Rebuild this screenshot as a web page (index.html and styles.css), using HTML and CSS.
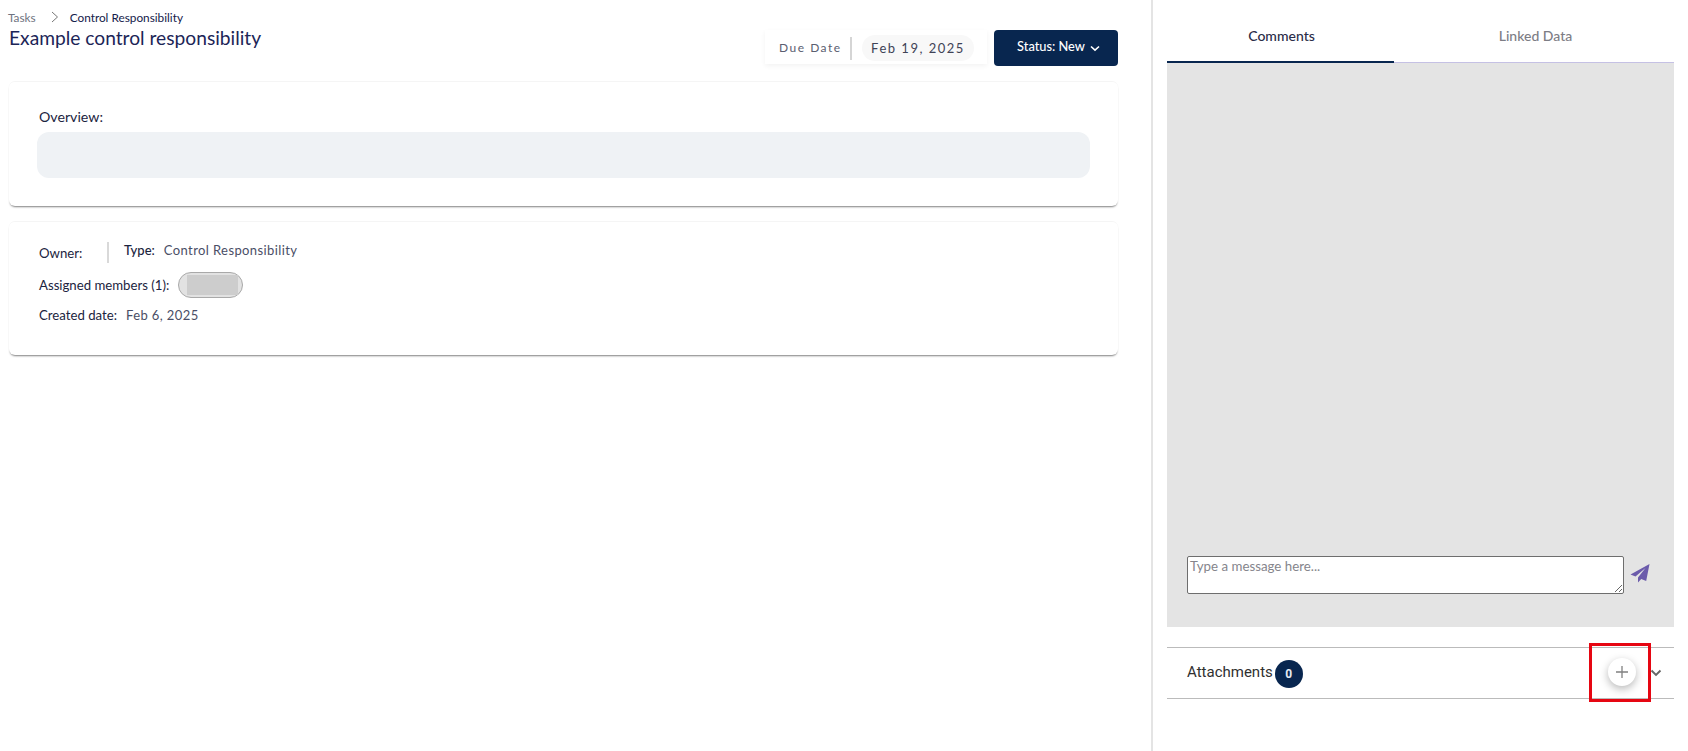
FILE: index.html
```html
<!DOCTYPE html>
<html lang="en">
<head>
<meta charset="utf-8">
<title>Example control responsibility</title>
<link rel="stylesheet" href="styles.css">
</head>
<body>
<div class="page">
  <main class="left">
    <header class="head">
      <div class="head-text">
        <nav class="crumbs">
          <span class="crumb-root">Tasks</span>
          <svg class="crumb-sep" width="10" height="12" viewBox="0 0 10 12"><path d="M2 1l5.5 5L2 11" fill="none" stroke="#777" stroke-width="1"/></svg>
          <span class="crumb-cur">Control Responsibility</span>
        </nav>
        <h1 class="title">Example control responsibility</h1>
      </div>
      <div class="head-actions">
        <div class="due">
          <span class="due-label">Due Date</span>
          <span class="due-div"></span>
          <span class="due-pill">Feb 19, 2025</span>
        </div>
        <button class="status">Status: New
          <svg class="status-chev" width="10" height="7" viewBox="0 0 10 7"><path d="M1 1.5l4 3.6 4-3.6" fill="none" stroke="#fff" stroke-width="1.6"/></svg>
        </button>
      </div>
    </header>

    <section class="card card-overview">
      <div class="ov-label">Overview:</div>
      <div class="ov-box"></div>
    </section>

    <section class="card card-meta">
      <div class="meta-row1">
        <span class="label owner">Owner:</span>
        <span class="meta-div"></span>
        <span class="label type">Type:</span>
        <span class="val type-val">Control Responsibility</span>
      </div>
      <div class="meta-row2">
        <span class="label">Assigned members (1):</span>
        <span class="chip"><span class="chip-in"></span></span>
      </div>
      <div class="meta-row3">
        <span class="label">Created date:</span>
        <span class="val">Feb 6, 2025</span>
      </div>
    </section>
  </main>

  <aside class="right">
    <div class="tabs">
      <div class="tab tab-on">Comments</div>
      <div class="tab tab-off">Linked Data</div>
    </div>
    <div class="chat">
      <div class="composer">
        <textarea class="input" placeholder="Type a message here..."></textarea>
        <svg class="send" width="20" height="20" viewBox="0 0 20 20"><path d="M19.5 1L0.5 11.5l5 2 10-8.5-7.5 9.5v5l3.2-3.6 5 2z" fill="#6b5bab"/></svg>
      </div>
    </div>
    <div class="attach">
      <span class="attach-name">Attachments</span>
      <span class="badge">0</span>
      <span class="plus-btn">
        <svg width="14" height="14" viewBox="0 0 14 14"><path d="M7 1v12M1 7h12" stroke="#808080" stroke-width="1.3" fill="none"/></svg>
      </span>
      <svg class="att-chev" width="12" height="8" viewBox="0 0 12 8"><path d="M1.5 1.5L6 6l4.5-4.5" fill="none" stroke="#666" stroke-width="1.9"/></svg>
      <span class="highlight"></span>
    </div>
  </aside>
</div>
</body>
</html>
```
FILE: styles.css
```css
* { box-sizing: border-box; }
html, body { margin: 0; padding: 0; height: 100%; background: #fff; overflow: hidden; }
body { font-family: Lato, "Liberation Sans", sans-serif; color: #1b2440; }
.page { display: flex; height: 751px; }

.left { width: 1153px; padding: 0 33px 0 9px; border-right: 2px solid #e4e4e4; flex: none; }
.head { display: flex; justify-content: space-between; height: 81px; }
.crumbs { display: flex; align-items: center; height: 14px; margin: 10px 0 0 -1px; font-size: 11.8px; }
.crumb-root { color: #6f7380; }
.crumb-sep { margin: 0 10px 0 14px; }
.crumb-cur { color: #14204a; }
.title { margin: 2px 0 0; font-size: 19.2px; line-height: 24px; font-weight: 400; color: #1c2557; }
.head-actions { display: flex; align-items: flex-start; margin-top: 30px; }
.due { display: flex; align-items: center; width: 222px; height: 34px; padding: 5px 0 3px 14px; margin-right: 7px; background: #fff; box-shadow: 0 2px 5px rgba(0,0,0,.05); letter-spacing: 1.5px; color: #5a5e70; }
.due-label { width: 71px; flex: none; font-size: 12px; margin-top: -2px; }
.due-div { width: 2px; height: 23px; background: #d5d5d5; flex: none; }
.due-pill { width: 112px; height: 26px; margin-left: 10px; border-radius: 13px; background: #f8f8f8; display: flex; align-items: center; justify-content: center; flex: none; color: #3f4356; font-size: 13px; }
.status { width: 124px; height: 36px; border: 0; border-radius: 4px; background: #08264f; color: #fff; font: 500 12.8px Lato, sans-serif; padding: 0 0 4px 5px; display: flex; align-items: center; justify-content: center; gap: 5px; }
.status-chev { margin-top: 4px; }

.card { background: #fff; border-top: 1px solid #f5f5f5; border-radius: 6px; box-shadow: 0 2px 2px -1px rgba(0,0,0,.5); }
.label { font-size: 13.2px; color: #1b2440; }
.val { font-size: 13px; letter-spacing: .4px; color: #4a4e66; }
.card-overview { height: 125px; padding: 26px 28px 0 28px; }
.ov-label { font-size: 14.2px; line-height: 17px; margin-left: 2px; color: #1b2440; }
.ov-box { height: 46px; margin-top: 7px; border-radius: 12px; background: #eff2f5; }
.card-meta { height: 134px; margin-top: 15px; padding: 20px 30px 0; }
.meta-row1 { display: flex; align-items: flex-start; height: 21px; }
.owner { margin-top: 3px; line-height: 17px; width: 68px; }
.meta-div { width: 2px; height: 21px; background: #d9d9d9; margin-right: 15px; }
.type { font-weight: 500; font-size: 13px; line-height: 17px; margin-right: 9px; }
.type-val { line-height: 17px; }
.meta-row2 { display: flex; align-items: center; height: 26px; margin-top: 9px; }
.chip { width: 65px; height: 26px; margin-left: 9px; border: 1px solid #a9a9a9; border-radius: 13px; background: #e2e2e2; padding: 2px 4px 2px 8px; display: flex; }
.chip-in { flex: 1; background: #cdcdcd; }
.meta-row3 { display: flex; align-items: center; gap: 9px; height: 20px; margin-top: 7px; }

.right { width: 507px; margin-left: 14px; flex: none; }
.tabs { display: flex; height: 63px; border-bottom: 1px solid #c5c1e4; }
.tab { text-align: center; font-size: 14px; line-height: 71px; height: 63px; font-weight: 500; }
.tab-on { width: 227px; padding-left: 2px; color: #2a2c48; border-bottom: 2px solid #08264f; }
.tab-off { flex: 1; padding-left: 3px; color: #7d7d85; }
.chat { height: 564px; background: #e4e4e4; padding-top: 493px; }
.composer { display: flex; align-items: flex-start; padding-left: 20px; }
.input { width: 437px; height: 38px; border: 1px solid #6e6e6e; border-radius: 2px; background: #fff; padding: 1px 2px; font: 13.3px Lato, sans-serif; display: block; margin: 0; }
.input::placeholder { color: #85858c; opacity: 1; }
.send { margin: 7px 0 0 6px; }
.attach { position: relative; display: flex; align-items: center; height: 52px; margin-top: 20px; border-top: 1px solid #bbb; border-bottom: 1px solid #bbb; padding-left: 20px; }
.attach-name { font: 400 15px Roboto, sans-serif; color: #303030; margin-top: -2px; }
.badge { width: 28px; height: 28px; margin-left: 2px; margin-top: 2px; border-radius: 50%; background: #08264f; color: #e6ebf3; display: flex; align-items: center; justify-content: center; font: 700 12px Roboto, sans-serif; }
.plus-btn { width: 28px; height: 28px; margin-left: auto; margin-right: 14px; margin-top: -2px; border-radius: 50%; background: #fff; box-shadow: 0 3px 8px rgba(0,0,0,.28); display: flex; align-items: center; justify-content: center; }
.att-chev { margin-right: 12px; }
.highlight { position: absolute; left: 422px; top: -5px; width: 62px; height: 59px; border: 3px solid #e60612; }
```
